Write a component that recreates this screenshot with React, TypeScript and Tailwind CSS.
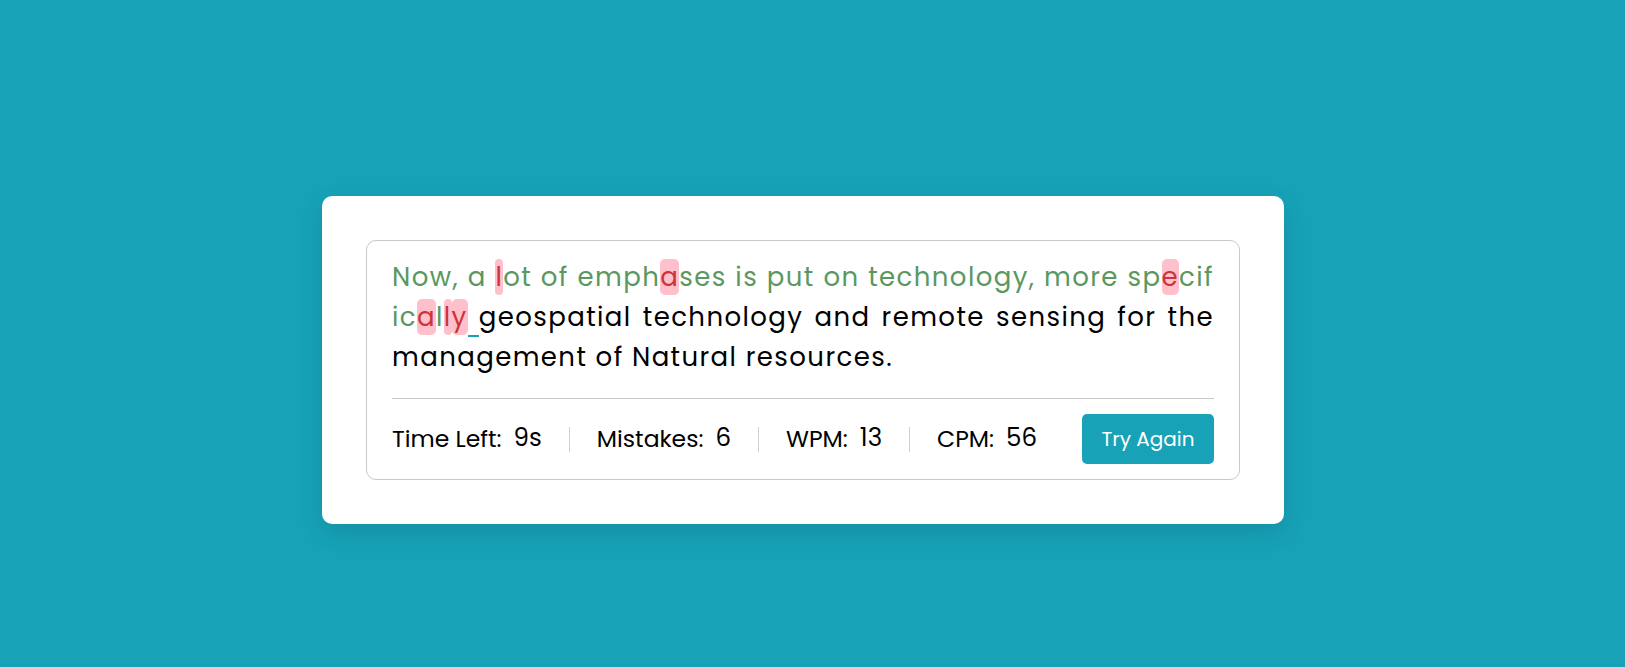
import React from "react";

type Seg = { t: string; k: "g" | "e" | "c" | "n" };

const line1: Seg[] = [
  { t: "Now, a ", k: "g" },
  { t: "l", k: "e" },
  { t: "ot of emph", k: "g" },
  { t: "a", k: "e" },
  { t: "ses is put on technology, more sp", k: "g" },
  { t: "e", k: "e" },
  { t: "cif", k: "g" },
];
const line2: Seg[] = [
  { t: "ic", k: "g" },
  { t: "a", k: "e" },
  { t: "l", k: "g" },
  { t: "l", k: "e" },
  { t: "y", k: "e" },
  { t: " ", k: "c" },
  { t: "geospatial technology and remote sensing for the", k: "n" },
];
const line3: Seg[] = [{ t: "management of Natural resources.", k: "n" }];

function Seg({ s }: { s: Seg }) {
  if (s.k === "g") return <span className="text-[#5a985f]">{s.t}</span>;
  if (s.k === "e")
    return <span className="text-[#cb3439] bg-[#ffc0cb] rounded-[5px]">{s.t}</span>;
  if (s.k === "c")
    return <span className="border-b-2 border-[#17a2b8] whitespace-pre">{s.t}</span>;
  return <span className="text-black">{s.t}</span>;
}

function Line({ segs, justify }: { segs: Seg[]; justify: boolean }) {
  return (
    <div
      className={
        justify
          ? "text-justify [text-align-last:justify] whitespace-nowrap"
          : "text-left whitespace-nowrap"
      }
    >
      {segs.map((s, i) => (
        <Seg key={i} s={s} />
      ))}
    </div>
  );
}

function Stat({ label, value, last }: { label: string; value: string; last?: boolean }) {
  return (
    <div
      className={
        last
          ? "flex items-center px-[27px] first:pl-0"
          : "flex items-center px-[27px] first:pl-0 border-r border-[#cfcfcf] h-[25px]"
      }
    >
      <span className="text-[23.5px] text-black leading-none">{label}</span>
      <span className="text-[24.5px] text-black leading-none ml-[12px] -translate-y-[1px]">{value}</span>
    </div>
  );
}

export default function App() {
  return (
    <div
      className="min-h-screen w-full bg-[#17a2b8] flex justify-center items-start pt-[196px] pr-[19px]"
      style={{ fontFamily: '"Poppins", "Inter", sans-serif' }}
    >
      <div className="w-[962px] bg-white rounded-[10px] p-[44px] shadow-[0_8px_24px_rgba(0,0,0,0.12)]">
        <div className="border border-[#c9c9c9] rounded-[10px] px-[25px] pt-[16px] pb-[15px]">
          <div className="text-[26px] leading-[40px] tracking-[1.4px] mb-[21px]">
            <Line segs={line1} justify />
            <Line segs={line2} justify />
            <Line segs={line3} justify={false} />
          </div>
          <div className="border-t border-[#c9c9c9] pt-[15px] flex items-center justify-between">
            <div className="flex items-center">
              <Stat label="Time Left:" value="9s" />
              <Stat label="Mistakes:" value="6" />
              <Stat label="WPM:" value="13" />
              <Stat label="CPM:" value="56" last />
            </div>
            <button className="h-[50px] w-[132px] bg-[#17a2b8] text-white text-[20px] rounded-[5px]">
              Try Again
            </button>
          </div>
        </div>
      </div>
    </div>
  );
}
